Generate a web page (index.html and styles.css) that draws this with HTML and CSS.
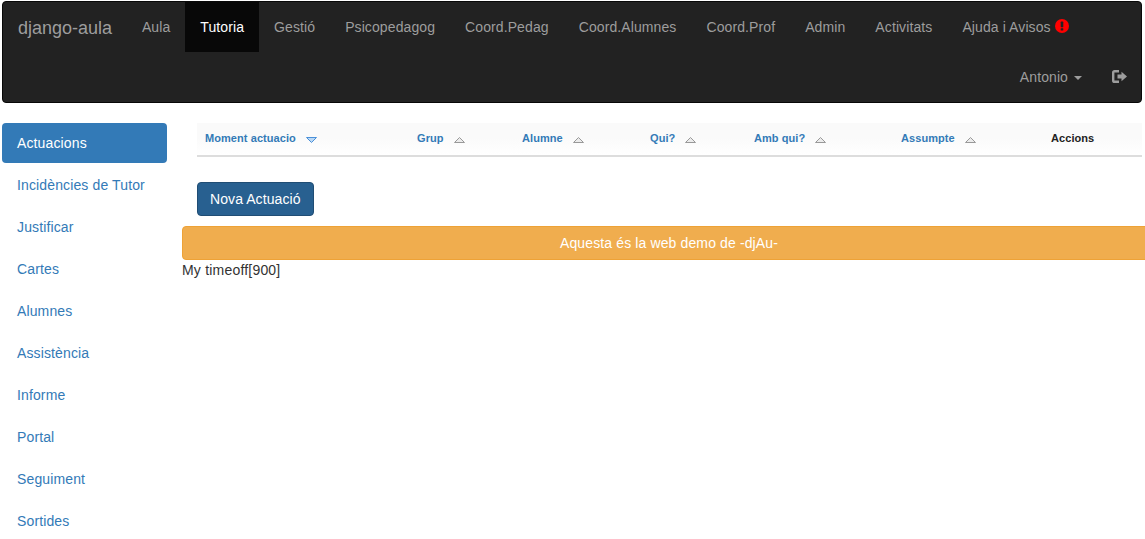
FILE: index.html
```html
<!DOCTYPE html>
<html lang="ca">
<head>
    <meta charset="UTF-8">
    <meta name="viewport" content="width=device-width, initial-scale=1.0">
    <title>django-aula</title>
    <link rel="stylesheet" href="styles.css">
</head>
<body>
    <nav class="navbar">
        <div class="nav-row">
            <a class="brand" href="#">django-aula</a>
            <a class="nav-link" href="#">Aula</a>
            <a class="nav-link active" href="#">Tutoria</a>
            <a class="nav-link" href="#">Gestió</a>
            <a class="nav-link" href="#">Psicopedagog</a>
            <a class="nav-link" href="#">Coord.Pedag</a>
            <a class="nav-link" href="#">Coord.Alumnes</a>
            <a class="nav-link" href="#">Coord.Prof</a>
            <a class="nav-link" href="#">Admin</a>
            <a class="nav-link" href="#">Activitats</a>
            <a class="nav-link" href="#">Ajuda i Avisos
                <svg class="alert-icon" viewBox="0 0 14 14" width="14" height="14">
                    <circle cx="7" cy="7" r="7" fill="#f00"/>
                    <rect x="5.7" y="2.6" width="2.6" height="5.6" rx="0.6" fill="#222"/>
                    <rect x="5.7" y="9.2" width="2.6" height="2.4" rx="0.5" fill="#222"/>
                </svg>
            </a>
        </div>
        <div class="nav-row nav-row-right">
            <a class="nav-link" href="#">Antonio <span class="caret"></span></a>
            <a class="nav-link logout" href="#">
                <svg viewBox="0 0 15 13" width="15" height="13">
                    <path d="M7 1.2H2.6Q1.2 1.2 1.2 2.6V10.4Q1.2 11.8 2.6 11.8H7" fill="none" stroke="#9d9d9d" stroke-width="2.4"/>
                    <path d="M5.5 4.6H9.5V1.8L15 6.5L9.5 11.2V8.4H5.5Z" fill="#9d9d9d"/>
                </svg>
            </a>
        </div>
    </nav>

    <div class="layout">
        <ul class="sidebar">
            <li><a class="active" href="#">Actuacions</a></li>
            <li><a href="#">Incidències de Tutor</a></li>
            <li><a href="#">Justificar</a></li>
            <li><a href="#">Cartes</a></li>
            <li><a href="#">Alumnes</a></li>
            <li><a href="#">Assistència</a></li>
            <li><a href="#">Informe</a></li>
            <li><a href="#">Portal</a></li>
            <li><a href="#">Seguiment</a></li>
            <li><a href="#">Sortides</a></li>
        </ul>

        <main class="content">
            <div class="inner">
                <table class="grid">
                    <thead>
                        <tr>
                            <th class="col-moment"><a href="#">Moment actuacio</a>
                                <svg class="sort" viewBox="0 0 11 6" width="11" height="6"><path class="sort-down" d="M.5.5H10.5L5.5 5.5Z"/></svg></th>
                            <th class="col-grup"><a href="#">Grup</a>
                                <svg class="sort" viewBox="0 0 11 6" width="11" height="6"><path class="sort-up" d="M.5 5.5H10.5L5.5.5Z"/></svg></th>
                            <th class="col-alumne"><a href="#">Alumne</a>
                                <svg class="sort" viewBox="0 0 11 6" width="11" height="6"><path class="sort-up" d="M.5 5.5H10.5L5.5.5Z"/></svg></th>
                            <th class="col-qui"><a href="#">Qui?</a>
                                <svg class="sort" viewBox="0 0 11 6" width="11" height="6"><path class="sort-up" d="M.5 5.5H10.5L5.5.5Z"/></svg></th>
                            <th class="col-amb"><a href="#">Amb qui?</a>
                                <svg class="sort" viewBox="0 0 11 6" width="11" height="6"><path class="sort-up" d="M.5 5.5H10.5L5.5.5Z"/></svg></th>
                            <th class="col-assumpte"><a href="#">Assumpte</a>
                                <svg class="sort" viewBox="0 0 11 6" width="11" height="6"><path class="sort-up" d="M.5 5.5H10.5L5.5.5Z"/></svg></th>
                            <th>Accions</th>
                        </tr>
                    </thead>
                </table>
                <a class="btn" href="#">Nova Actuació</a>
            </div>
            <div class="demo-alert">Aquesta és la web demo de -djAu-</div>
            <div class="timeoff">My timeoff[900]</div>
        </main>
    </div>
</body>
</html>
```

FILE: styles.css
```css
html, body {
    overflow: hidden;
}
body {
    margin: 0;
    height: 539px;
    font-family: "Liberation Sans", Arial, sans-serif;
    font-size: 14px;
    line-height: 20px;
    color: #333;
    background-color: #fff;
}
a {
    text-decoration: none;
    color: #337ab7;
}

/* barra superior */
.navbar {
    margin: 1px 3px 0 2px;
    height: 100px;
    background-color: #222;
    border: 1px solid #080808;
    border-radius: 4px;
}
.nav-row {
    display: flex;
    height: 50px;
}
.nav-row-right {
    justify-content: flex-end;
}
.brand {
    padding: 16px 14.8px 14px 15px;
    font-size: 18px;
    color: #9d9d9d;
}
.nav-link {
    display: block;
    padding: 15px;
    letter-spacing: 0.1px;
    color: #9d9d9d;
}
.nav-link.active {
    color: #fff;
    background-color: #080808;
}
.alert-icon {
    vertical-align: -1px;
}
.caret {
    display: inline-block;
    width: 0;
    height: 0;
    margin-left: 2px;
    vertical-align: middle;
    border-top: 4px solid #9d9d9d;
    border-left: 4px solid transparent;
    border-right: 4px solid transparent;
}
.logout {
    padding-right: 14px;
}
.logout svg {
    vertical-align: -1px;
}

/* columnes */
.layout {
    display: flex;
    margin-top: 20px;
}
.sidebar {
    flex: none;
    width: 165px;
    margin: 0 0 0 2px;
    padding: 0;
    list-style: none;
    letter-spacing: 0.13px;
}
.sidebar li + li {
    margin-top: 2px;
}
.sidebar a {
    display: block;
    padding: 10px 15px;
    border-radius: 4px;
}
.sidebar a.active {
    color: #fff;
    background-color: #337ab7;
}
.content {
    flex: none;
    width: 974px;
    margin-left: 15px;
}
.inner {
    width: 945px;
    margin-left: 15px;
}

/* taula */
.grid {
    width: 100%;
    border-collapse: collapse;
    table-layout: fixed;
}
.grid th {
    height: 33px;
    padding: 0 8px 2px;
    box-sizing: border-box;
    font-size: 11px;
    font-weight: bold;
    letter-spacing: 0.07px;
    text-align: left;
    color: #222;
    border-bottom: 2px solid #ddd;
    background: linear-gradient(#fafafa 0, #fafafa 45%, #fff 100%);
}
.col-moment { width: 212px; }
.col-grup { width: 105px; }
.col-alumne { width: 128px; }
.col-qui { width: 104px; }
.col-amb { width: 147px; }
.col-assumpte { width: 150px; }
.sort {
    margin-left: 7px;
    vertical-align: -1px;
}
.sort-up {
    fill: #ececec;
    stroke: #999;
}
.sort-down {
    fill: #bcd9f5;
    stroke: #4a90d9;
}

.btn {
    display: inline-block;
    margin-top: 25px;
    padding: 6px 12px;
    letter-spacing: 0.08px;
    color: #fff;
    background-color: #286090;
    border: 1px solid #204d74;
    border-radius: 4px;
}
.demo-alert {
    box-sizing: border-box;
    height: 34px;
    margin-top: 10px;
    padding: 6px 12px;
    letter-spacing: 0.125px;
    text-align: center;
    color: #fff;
    background-color: #f0ad4e;
    border: 1px solid #eea236;
    border-radius: 4px;
}
.timeoff {
    letter-spacing: 0.2px;
}
```
